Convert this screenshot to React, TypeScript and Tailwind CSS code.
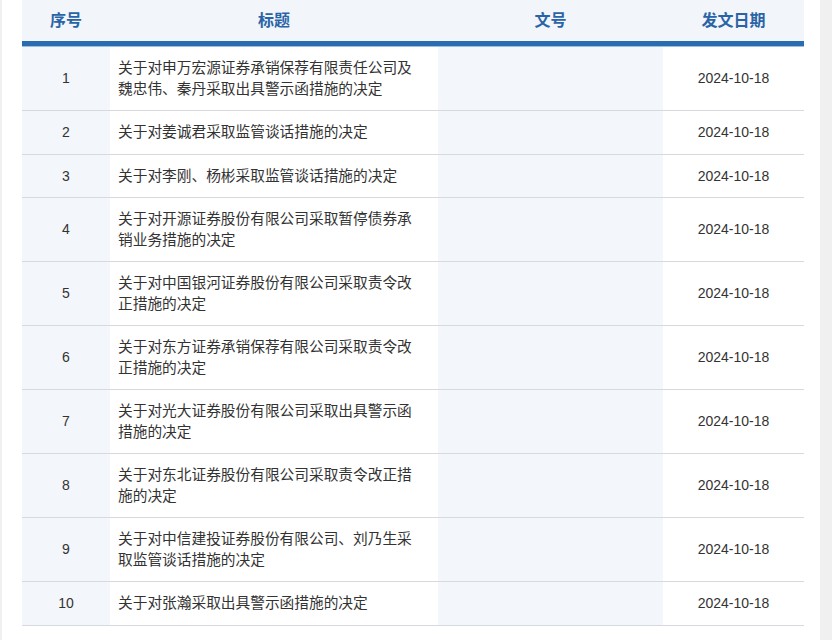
const rows: [string, string][] = [
  ["1", "关于对申万宏源证券承销保荐有限责任公司及魏忠伟、秦丹采取出具警示函措施的决定"],
  ["2", "关于对姜诚君采取监管谈话措施的决定"],
  ["3", "关于对李刚、杨彬采取监管谈话措施的决定"],
  ["4", "关于对开源证券股份有限公司采取暂停债券承销业务措施的决定"],
  ["5", "关于对中国银河证券股份有限公司采取责令改正措施的决定"],
  ["6", "关于对东方证券承销保荐有限公司采取责令改正措施的决定"],
  ["7", "关于对光大证券股份有限公司采取出具警示函措施的决定"],
  ["8", "关于对东北证券股份有限公司采取责令改正措施的决定"],
  ["9", "关于对中信建投证券股份有限公司、刘乃生采取监管谈话措施的决定"],
  ["10", "关于对张瀚采取出具警示函措施的决定"],
];

export default function App() {
  return (
    <div
      className="w-[832px] h-[640px] bg-white flex overflow-hidden"
      style={{ fontFamily: '"Liberation Sans", "Noto Sans CJK SC", sans-serif' }}
    >
      <div className="w-[2px] bg-[#f0f0f0]" />
      <div className="w-[20px]" />
      <div className="w-[782px] flex flex-col text-[14px] text-[#333]">
        <div className="flex h-[41px] bg-[#f2f5fa] text-[#2a64a6] font-bold text-[16px] items-center">
          <div className="w-[88px] text-center">序号</div>
          <div className="w-[328px] text-center">标题</div>
          <div className="w-[225px] text-center">文号</div>
          <div className="w-[141px] text-center">发文日期</div>
        </div>
        <div className="h-[5px] bg-[#2a6cb0]" />
        <div className="h-[1px] bg-[#9cc0e4]" />
        {rows.map(([n, t]) => (
          <div key={n} className="flex border-b border-[#d6d9dd] leading-[20.5px]">
            <div className="w-[88px] bg-[#f3f6fa] flex items-center justify-center">{n}</div>
            <div className="w-[328px] py-[11px] pl-[8px] pr-[20px] text-[14.7px]">{t}</div>
            <div className="w-[225px] bg-[#f3f6fa]" />
            <div className="w-[141px] flex items-center justify-center">2024-10-18</div>
          </div>
        ))}
      </div>
      <div className="flex-1" />
      <div className="w-[12px] bg-[#f0f0f0]" />
    </div>
  );
}
